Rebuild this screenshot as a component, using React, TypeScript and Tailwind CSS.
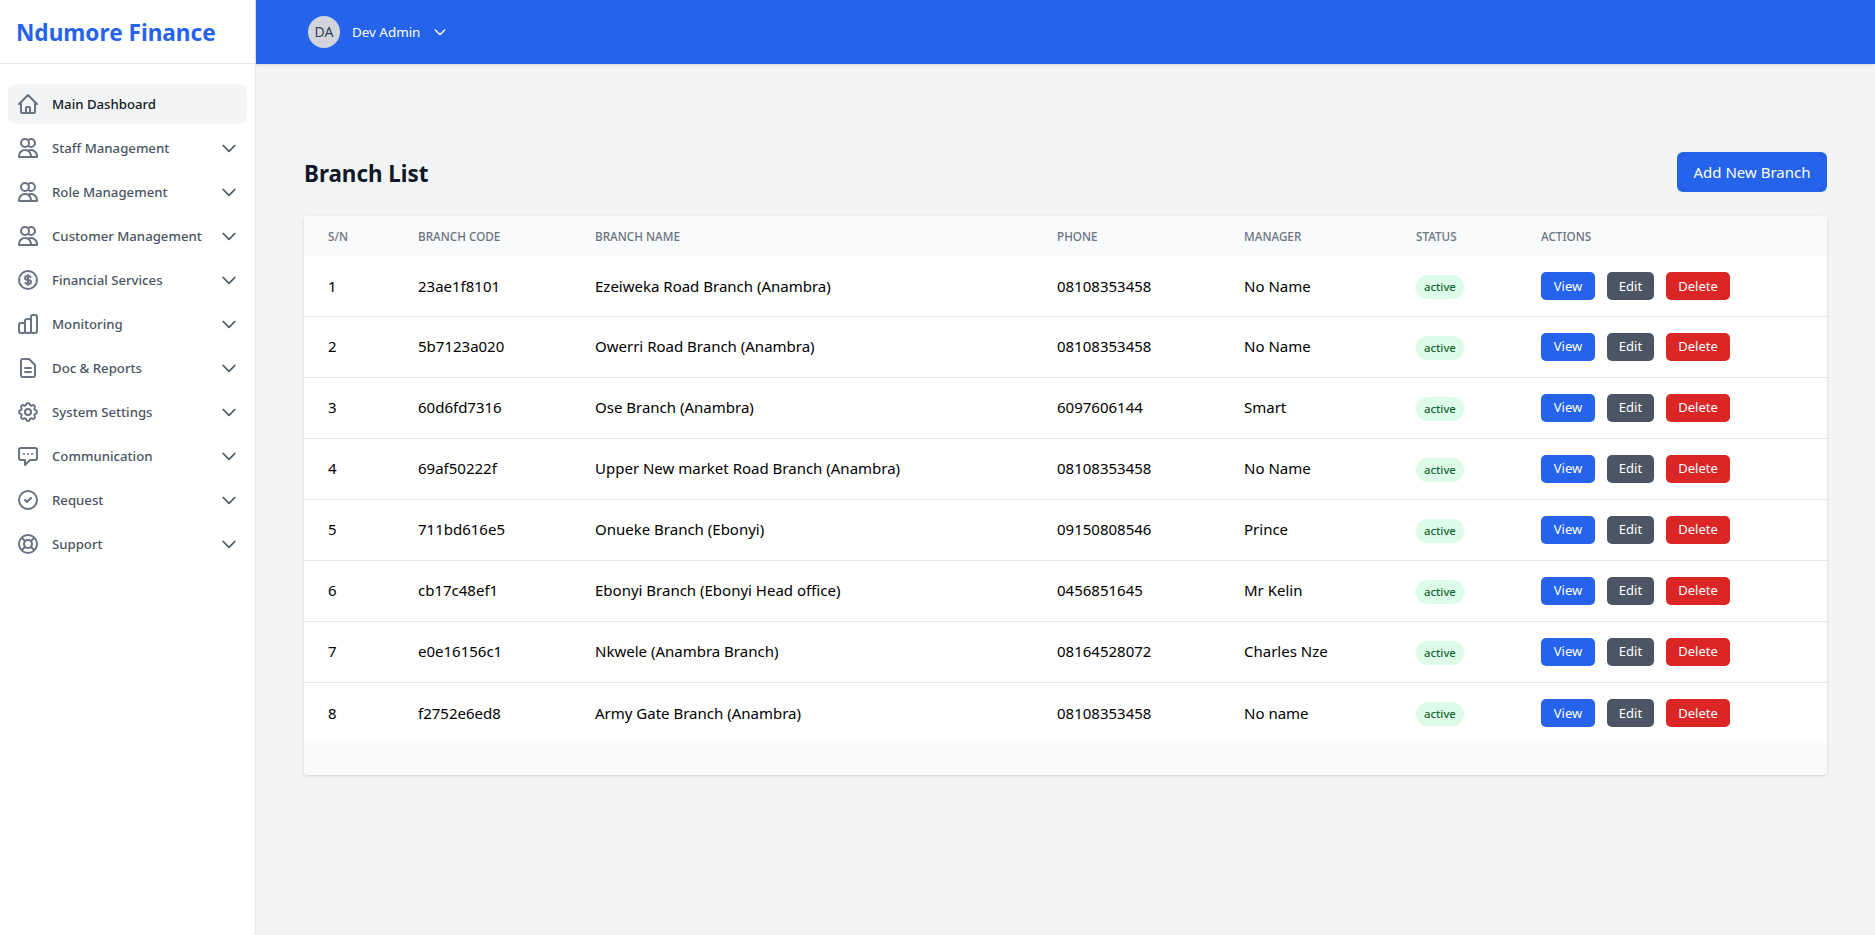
import { HiOutlineHome, HiOutlineUsers, HiOutlineCurrencyDollar, HiOutlineChartBar, HiOutlineDocumentText, HiOutlineCog, HiOutlineChatAlt, HiOutlineCheckCircle, HiOutlineSupport, HiOutlineChevronDown } from "react-icons/hi";
import type { ComponentType } from "react";

const nav: { label: string; icon: ComponentType<{ className?: string }>; active?: boolean }[] = [
  { label: "Main Dashboard", icon: HiOutlineHome, active: true },
  { label: "Staff Management", icon: HiOutlineUsers },
  { label: "Role Management", icon: HiOutlineUsers },
  { label: "Customer Management", icon: HiOutlineUsers },
  { label: "Financial Services", icon: HiOutlineCurrencyDollar },
  { label: "Monitoring", icon: HiOutlineChartBar },
  { label: "Doc & Reports", icon: HiOutlineDocumentText },
  { label: "System Settings", icon: HiOutlineCog },
  { label: "Communication", icon: HiOutlineChatAlt },
  { label: "Request", icon: HiOutlineCheckCircle },
  { label: "Support", icon: HiOutlineSupport },
];

const rows = [
  ["1", "23ae1f8101", "Ezeiweka Road Branch (Anambra)", "08108353458", "No Name"],
  ["2", "5b7123a020", "Owerri Road Branch (Anambra)", "08108353458", "No Name"],
  ["3", "60d6fd7316", "Ose Branch (Anambra)", "6097606144", "Smart"],
  ["4", "69af50222f", "Upper New market Road Branch (Anambra)", "08108353458", "No Name"],
  ["5", "711bd616e5", "Onueke Branch (Ebonyi)", "09150808546", "Prince"],
  ["6", "cb17c48ef1", "Ebonyi Branch (Ebonyi Head office)", "0456851645", "Mr Kelin"],
  ["7", "e0e16156c1", "Nkwele (Anambra Branch)", "08164528072", "Charles Nze"],
  ["8", "f2752e6ed8", "Army Gate Branch (Anambra)", "08108353458", "No name"],
];

export default function App() {
  return (
    <div className="flex h-[935px] overflow-hidden bg-[#f3f4f6] font-['Noto_Sans',sans-serif]">
      <aside className="w-[256px] shrink-0 bg-white border-r border-[#e5e7eb]">
        <div className="h-[64px] flex items-center px-[16px] pt-[3px] border-b border-[#e5e7eb]">
          <h1 className="text-[22.6px] font-bold text-[#2563eb] whitespace-nowrap">Ndumore Finance</h1>
        </div>
        <nav className="px-2 pt-5 flex flex-col gap-1">
          {nav.map((n) => (
            <div key={n.label} className={`h-10 flex items-center pl-2 pr-2 rounded-lg text-[13.2px] font-medium ${n.active ? "bg-[#f3f4f6] text-[#111827]" : "text-[#4b5563]"}`}>
              <n.icon className="w-6 h-6 text-[#6b7280] mr-3 shrink-0" />
              <span className="flex-1 whitespace-nowrap pt-0.5">{n.label}</span>
              {!n.active && <HiOutlineChevronDown className="w-5 h-5 text-[#4b5563]" />}
            </div>
          ))}
        </nav>
      </aside>
      <div className="flex-1 flex flex-col min-w-0">
        <header className="h-[64px] shrink-0 bg-[#2563eb] flex items-center pl-[52px] shadow-sm">
          <div className="w-8 h-8 rounded-full bg-[#d1d5db] flex items-center justify-center text-sm text-[#374151]">DA</div>
          <span className="ml-3 text-[13.4px] text-white">Dev Admin</span>
          <HiOutlineChevronDown className="ml-3 w-4 h-4 text-white" />
        </header>
        <main className="flex-1 px-12 pt-[88px]">
          <div className="flex items-center justify-between h-10 mb-6">
            <h2 className="text-[22.4px] pt-1 font-bold text-[#111827]">Branch List</h2>
            <button className="h-10 w-[150px] rounded-md bg-[#2563eb] text-[15px] text-white">Add New Branch</button>
          </div>
          <div className="bg-white rounded-sm shadow-[0_1px_3px_rgba(0,0,0,0.15)] overflow-hidden">
            <table className="w-full table-fixed border-collapse">
              <thead className="bg-[#f9fafb]">
                <tr className="h-10 text-left text-[11.7px] text-[#6b7280] uppercase">
                  <th className="w-[90px] px-6 pt-0.5 font-medium">S/N</th>
                  <th className="w-[177px] px-6 pt-0.5 font-medium">Branch Code</th>
                  <th className="w-[462px] px-6 pt-0.5 font-medium">Branch Name</th>
                  <th className="w-[187px] px-6 pt-0.5 font-medium">Phone</th>
                  <th className="w-[172px] px-6 pt-0.5 font-medium">Manager</th>
                  <th className="w-[125px] px-6 pt-0.5 font-medium">Status</th>
                  <th className="px-6 pt-0.5 font-medium">Actions</th>
                </tr>
              </thead>
              <tbody className="divide-y divide-[#e5e7eb] text-[15px] text-black">
                {rows.map((r) => (
                  <tr key={r[0]} className="h-[61px] first:h-[60px]">
                    {r.map((c, i) => (
                      <td key={i} className="px-6 whitespace-nowrap">{c}</td>
                    ))}
                    <td className="px-6">
                      <span className="inline-flex h-6 mt-0.5 pt-0.5 items-center px-2 rounded-full bg-[#dcfce7] text-[11.3px] font-medium text-[#166534]">active</span>
                    </td>
                    <td className="px-6">
                      <div className="flex gap-3 text-[13px] text-white">
                        <button className="h-7 w-[54px] pt-px rounded-[5px] bg-[#2563eb]">View</button>
                        <button className="h-7 w-[47px] pt-px rounded-[5px] bg-[#4b5563]">Edit</button>
                        <button className="h-7 w-[64px] pt-px rounded-[5px] bg-[#dc2626]">Delete</button>
                      </div>
                    </td>
                  </tr>
                ))}
              </tbody>
            </table>
            <div className="h-8 bg-[#f9fafb]" />
          </div>
        </main>
      </div>
    </div>
  );
}
